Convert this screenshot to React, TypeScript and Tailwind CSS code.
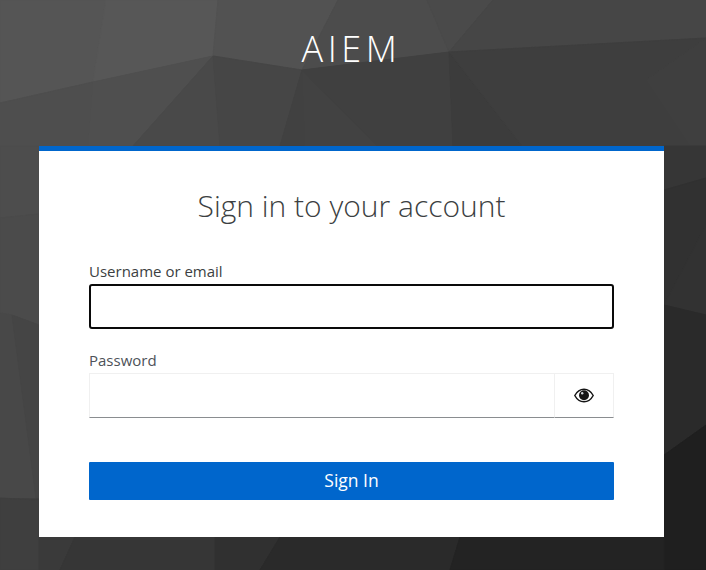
const polys: [string, string][] = [
  ["0,0 106,0 93,82 0,103", "#555555"],
  ["106,0 218,0 213,56 93,82", "#575757"],
  ["218,0 338,0 302,70 213,56", "#525252"],
  ["338,0 427,0 449,52 302,70", "#4c4c4c"],
  ["427,0 493,0 449,52", "#4a4a4a"],
  ["493,0 706,0 706,38 449,52", "#464646"],
  ["0,103 93,82 88,146 0,146", "#4e4e4e"],
  ["93,82 213,56 133,146 88,146", "#4f4f4f"],
  ["213,56 220,146 133,146", "#494949"],
  ["213,56 302,70 280,146 220,146", "#464646"],
  ["302,70 305,146 280,146", "#414141"],
  ["302,70 377,146 305,146", "#424242"],
  ["302,70 449,52 453,146 377,146", "#404040"],
  ["449,52 522,146 453,146", "#3c3c3c"],
  ["449,52 706,38 706,146 522,146", "#3e3e3e"],
  ["646,80 706,38 706,146 690,146", "#3f3f3f"],
  ["0,146 39,146 39,214 0,218", "#4d4d4d"],
  ["0,218 39,214 39,325 12,315 0,313", "#4b4b4b"],
  ["0,313 12,315 36,498 0,498", "#484848"],
  ["12,315 39,325 39,498 36,498", "#454545"],
  ["0,498 39,500 39,570 0,570", "#3f3f3f"],
  ["664,146 706,146 706,178 664,190", "#363636"],
  ["664,190 706,178 706,225 664,305", "#313131"],
  ["664,305 706,225 706,315", "#323232"],
  ["664,305 706,315 706,425 664,455", "#2a2a2a"],
  ["664,455 706,425 706,570 664,570", "#1f1f1f"],
  ["39,537 75,537 60,570 39,570", "#3a3a3a"],
  ["75,537 215,537 215,570 60,570", "#363636"],
  ["215,537 280,537 260,570 215,570", "#303030"],
  ["280,537 460,537 450,570 260,570", "#2a2a2a"],
  ["460,537 664,537 664,570 450,570", "#232323"],
];

function Eye() {
  return (
    <svg width="20" height="15" viewBox="0 0 20 15" aria-hidden="true">
      <path d="M0.8 7.5C3 3.4 6.2 1.2 10 1.2s7 2.2 9.2 6.3C17 11.6 13.8 13.8 10 13.8S3 11.6 0.8 7.5Z" fill="#fff" stroke="#151515" strokeWidth="1.5" />
      <circle cx="10" cy="7.2" r="5" fill="#151515" />
      <circle cx="8.2" cy="5.2" r="1.2" fill="#cfd3d8" />
    </svg>
  );
}

export default function App() {
  return (
    <div className="relative h-[570px] w-full overflow-hidden bg-[#3a3a3a] font-['Open_Sans',sans-serif]">
      <svg className="absolute inset-0 h-full w-full" viewBox="0 0 706 570" preserveAspectRatio="none" aria-hidden="true">
        {polys.map(([points, fill]) => (
          <polygon key={points} points={points} fill={fill} stroke={fill} strokeWidth="1" />
        ))}
      </svg>
      <div className="relative ml-[39px] w-[625px]">
        <div className="flex h-[146px] justify-center pt-[24px]">
          <h1 className="text-[36px] font-light leading-[50px] tracking-[4.6px] text-white">AIEM</h1>
        </div>
        <main className="h-[391px] border-t-[5px] border-[#0066cc] bg-white px-[50px]">
          <h2 className="mt-[34px] text-center text-[30px] font-light leading-[42px] text-[#3c3f42]">
            Sign in to your account
          </h2>
          <form className="mt-[34px]">
            <label className="block text-[15px] leading-[21px] text-[#3c3f42]">Username or email</label>
            <input className="mt-[2px] block h-[45px] w-full rounded-[3px] border-2 border-[#0a0a0a] bg-white outline-none" />
            <label className="mt-[21px] block text-[15px] leading-[21px] text-[#4d5258]">Password</label>
            <div className="mt-[2px] flex h-[45px] w-full">
              <input className="h-full min-w-0 flex-1 border border-[#f0f0f0] border-b-[#8a8d90] bg-white outline-none" />
              <button type="button" className="flex h-full w-[59px] items-center justify-center border border-l-0 border-[#f0f0f0] border-b-[#8a8d90]">
                <Eye />
              </button>
            </div>
            <button type="button" className="mt-[44px] block h-[38px] w-full rounded-[1px] bg-[#0066cc] pb-[2px] text-[17.5px] text-white">
              Sign In
            </button>
          </form>
        </main>
      </div>
    </div>
  );
}
